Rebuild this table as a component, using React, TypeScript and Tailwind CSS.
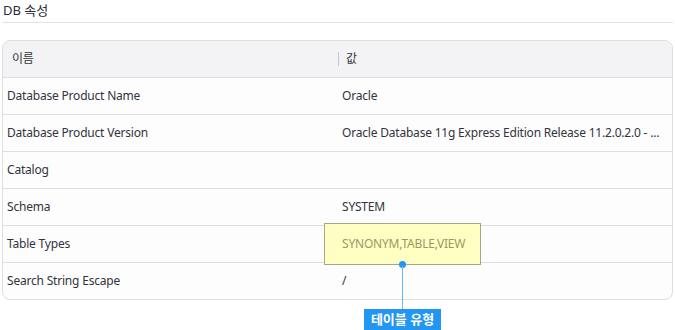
const rows: { name: string; value: string }[] = [
  { name: "Database Product Name", value: "Oracle" },
  {
    name: "Database Product Version",
    value: "Oracle Database 11g Express Edition Release 11.2.0.2.0 - ...",
  },
  { name: "Catalog", value: "" },
  { name: "Schema", value: "SYSTEM" },
  { name: "Table Types", value: "SYNONYM,TABLE,VIEW" },
  { name: "Search String Escape", value: "/" },
];

export default function App() {
  return (
    <div
      className="relative h-[330px] w-[675px] overflow-hidden bg-white text-[12px] tracking-[-0.2px] text-[#333340]"
      style={{ fontFamily: '"Noto Sans", "Noto Sans CJK KR", sans-serif' }}
    >
      <div className="mx-[2px] flex h-[23px] items-center border-b border-[#e2e2e2] pl-px pb-px text-[13px] tracking-normal text-[#2b2b3a]">
        DB 속성
      </div>

      <div className="mx-[2px] mt-[17px] w-[671px] overflow-hidden rounded-lg border border-[#dedede] bg-[#fdfdfd]">
        <div className="flex h-[36px] items-center bg-[#f3f3f5]">
          <div className="w-[335px] pl-[9px]">이름</div>
          <div className="flex flex-1 items-center">
            <span className="mr-[7px] h-[14px] w-px bg-[#c8c8c8]" />
            <span>값</span>
          </div>
        </div>
        {rows.map((row) => (
          <div
            key={row.name}
            className="flex h-[37px] items-center border-t border-[#dedede]"
          >
            <div className="w-[335px] pl-[4px]">{row.name}</div>
            <div className="min-w-0 flex-1 whitespace-nowrap pl-[4px]">
              {row.value}
            </div>
          </div>
        ))}
      </div>

      {/* highlight overlay */}
      <div className="absolute left-[324px] top-[223px] flex h-[42px] w-[157px] items-center border border-[#a8a68c] bg-[#ffffc4] pl-[17px] text-[#9c9860]">
        SYNONYM,TABLE,VIEW
      </div>
      <span className="absolute left-[399px] top-[261px] h-[7px] w-[7px] rounded-full bg-[#2196f3]" />
      <span className="absolute left-[402px] top-[266px] h-[43px] w-px bg-[#6ab8f7]" />
      <div className="absolute left-[364px] top-[309px] flex h-[22px] w-[77px] items-center justify-center bg-[#2196f3] text-[13px] font-bold tracking-normal text-white">
        테이블 유형
      </div>
    </div>
  );
}
